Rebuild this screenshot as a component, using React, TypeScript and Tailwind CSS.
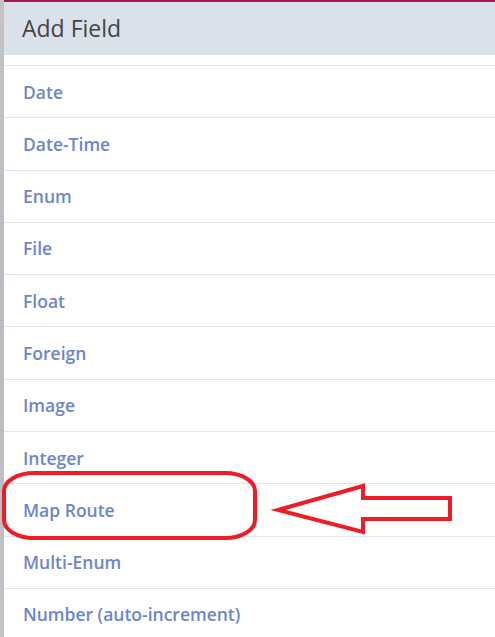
const fields = [
  'Date',
  'Date-Time',
  'Enum',
  'File',
  'Float',
  'Foreign',
  'Image',
  'Integer',
  'Map Route',
  'Multi-Enum',
  'Number (auto-increment)',
]

export default function App() {
  return (
    <div className="relative flex h-[637px] w-[495px] overflow-hidden bg-white font-['Open_Sans',sans-serif]">
      {/* page behind the modal */}
      <div className="w-[4px] shrink-0 bg-gradient-to-b from-[#c4c4c6] via-[#b9bbc0] to-[#c2c4c9]" />

      <div className="flex flex-1 flex-col border-t-2 border-[#a8164b]">
        <div className="flex h-[53px] shrink-0 items-center bg-[#dae1eb] px-[18px]">
          <h2 className="text-[23px] text-[#444]">Add Field</h2>
        </div>
        <div className="h-[10px] shrink-0" />
        <ul className="shrink-0 border-t border-[#e4e3ef]">
          {fields.map((f) => (
            <li
              key={f}
              className="flex h-[52.3px] items-center border-b border-[#e4e3ef] px-[19px] text-[17.5px] font-semibold text-[#6d86ca]"
            >
              {f}
            </li>
          ))}
        </ul>
      </div>

      {/* annotation */}
      <svg className="pointer-events-none absolute inset-0" width="495" height="637">
        <rect x="4" y="473" width="251" height="65" rx="30" ry="18" fill="none" stroke="#ee1c24" strokeWidth="4" />
        <polygon
          points="278,510 363,486 363,498 450,498 450,519 363,519 363,532"
          fill="none"
          stroke="#ee1c24"
          strokeWidth="4"
          strokeLinejoin="miter"
        />
      </svg>
    </div>
  )
}
